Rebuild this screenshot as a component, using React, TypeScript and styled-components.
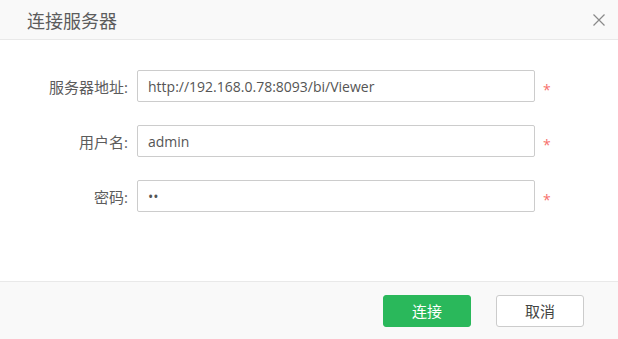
import React from 'react'
import styled, { createGlobalStyle } from 'styled-components'

const GlobalStyle = createGlobalStyle`
  html, body {
    margin: 0;
    padding: 0;
    background: #fff;
  }
  body {
    font-family: "Open Sans", "Noto Sans CJK SC", sans-serif;
  }
`

const Dialog = styled.div`
  width: 618px;
  height: 339px;
  display: flex;
  flex-direction: column;
  background: #fff;
  overflow: hidden;
`

const Header = styled.div`
  height: 40px;
  flex: none;
  box-sizing: border-box;
  display: flex;
  align-items: center;
  justify-content: space-between;
  padding: 0 13px 0 27px;
  background: #f9f9f9;
  border-bottom: 1px solid #e9e9e9;
`

const Title = styled.div`
  font-size: 18px;
  color: #5c5c5c;
`

const CloseButton = styled.button`
  width: 12px;
  height: 12px;
  padding: 0;
  border: none;
  background: none;
  display: flex;
  cursor: pointer;
  margin-top: 1px;
`

const Body = styled.div`
  flex: 1;
  display: flex;
  flex-direction: column;
  gap: 23px;
  padding-top: 30px;
`

const Row = styled.div`
  display: flex;
  align-items: center;
  height: 32px;
`

const Label = styled.label`
  width: 137px;
  flex: none;
  text-align: right;
  padding-right: 9px;
  box-sizing: border-box;
  font-size: 15px;
  color: #5c5c5c;
`

const Input = styled.input`
  width: 398px;
  height: 32px;
  box-sizing: border-box;
  border: 1px solid #cccccc;
  border-radius: 2px;
  padding: 0 10px;
  font-family: "Open Sans", "Noto Sans CJK SC", sans-serif;
  font-size: 14px;
  color: #555;
  outline: none;
  background: #fff;
`

const Required = styled.span`
  margin-left: 8px;
  margin-top: 6px;
  color: #f7706c;
  font-size: 14px;
`

const Footer = styled.div`
  height: 58px;
  flex: none;
  box-sizing: border-box;
  display: flex;
  align-items: center;
  justify-content: flex-end;
  gap: 25px;
  padding: 0 34px 0 0;
  background: #f9f9f9;
  border-top: 1px solid #e9e9e9;
`

const Button = styled.button<{ $primary?: boolean }>`
  width: 88px;
  height: 32px;
  box-sizing: border-box;
  border-radius: 3px;
  border: 1px solid ${({ $primary }) => ($primary ? '#2ab85b' : '#cccccc')};
  background: ${({ $primary }) => ($primary ? '#2ab85b' : '#fff')};
  color: ${({ $primary }) => ($primary ? '#fff' : '#444')};
  font-family: "Open Sans", "Noto Sans CJK SC", sans-serif;
  font-size: 15px;
  cursor: pointer;
  padding: 0;
`

const fields = [
  { label: '服务器地址:', value: 'http://192.168.0.78:8093/bi/Viewer', type: 'text' },
  { label: '用户名:', value: 'admin', type: 'text' },
  { label: '密码:', value: '12', type: 'password' },
]

export default function App() {
  return (
    <>
      <GlobalStyle />
      <Dialog>
        <Header>
          <Title>连接服务器</Title>
          <CloseButton aria-label="关闭">
            <svg width="12" height="12" viewBox="0 0 12 12">
              <path d="M0.5 0.5 L11.5 11.5 M11.5 0.5 L0.5 11.5" stroke="#8a8a8a" strokeWidth="1.2" />
            </svg>
          </CloseButton>
        </Header>
        <Body>
          {fields.map((f) => (
            <Row key={f.label}>
              <Label>{f.label}</Label>
              <Input type={f.type} defaultValue={f.value} readOnly />
              <Required>*</Required>
            </Row>
          ))}
        </Body>
        <Footer>
          <Button $primary>连接</Button>
          <Button>取消</Button>
        </Footer>
      </Dialog>
    </>
  )
}
